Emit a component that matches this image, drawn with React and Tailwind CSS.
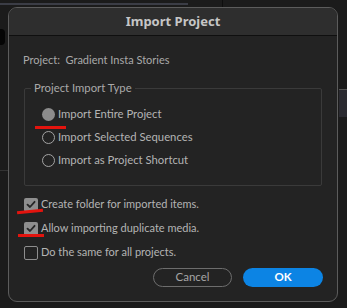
import React from 'react';

const font = { fontFamily: 'Lato, "Noto Sans", sans-serif' };

const Radio = ({ checked, label }) => (
    <div className="flex items-center h-[23px]">
        {checked ? (
            <span className="w-[13px] h-[13px] rounded-full bg-[#8c8c8c]" />
        ) : (
            <span className="w-[13px] h-[13px] rounded-full border-[1.5px] border-[#a3a3a3]" />
        )}
        <span className="ml-[3px] text-[11.3px] text-[#b4b4b4]">{label}</span>
    </div>
);

const Checkbox = ({ checked, label }) => (
    <div className="flex items-center h-[24px]">
        {checked ? (
            <span className="w-[14px] h-[14px] rounded-[2px] bg-[#8e8e8e] flex items-center justify-center">
                <svg width="10" height="9" viewBox="0 0 10 9">
                    <path d="M1.5 4.6 L4 7 L8.6 1.8" fill="none" stroke="#262626" strokeWidth="1.8" strokeLinecap="round" strokeLinejoin="round" />
                </svg>
            </span>
        ) : (
            <span className="w-[14px] h-[14px] rounded-[2px] border-[1.5px] border-[#8e8e8e]" />
        )}
        <span className="ml-[3px] text-[11px] text-[#b4b4b4]">{label}</span>
    </div>
);

export default function App() {
    return (
        <div className="relative w-[347px] h-[308px] bg-[#1b1b1b] overflow-hidden" style={font}>
            {/* background app chrome */}
            <div className="absolute left-0 top-[3px] w-[188px] h-[2px] bg-[#3b3d46]" />
            <div className="absolute left-[222px] top-0 w-px h-[7px] bg-[#0e0e0e]" />
            <div className="absolute left-0 top-[29px] w-[5px] h-[16px] bg-[#050505] rounded-r" />
            <div className="absolute left-[339px] top-[89px] w-[8px] h-[28px] bg-[#2b2b31] border-t border-[#555]" />
            <div className="absolute left-0 top-[170px] w-[8px] h-px bg-[#333]" />

            <div className="relative ml-[8px] mt-[7px] w-[330px] h-[295px] rounded-[9px] border border-[#5c5c5c] bg-[#232323] overflow-hidden flex flex-col">
                <div className="h-[28px] bg-[#2e2e2e] border-b border-[#0f0f0f] flex items-center justify-center">
                    <span className="text-[13px] font-bold text-[#c6c6c6]" style={{ fontFamily: '"Noto Sans", sans-serif' }}>Import Project</span>
                </div>

                <div className="pl-[14px] pr-[15px] pt-[16px] text-[11px] text-[#a9a9a9]">
                    Project:&nbsp; Gradient Insta Stories
                </div>

                <div className="relative ml-[15px] mr-[15px] mt-[19px] h-[98px] border border-[#3a3a3a] rounded-[2px]">
                    <span className="absolute left-[6px] top-[-9px] px-[3px] bg-[#232323] text-[11.3px] text-[#a9a9a9] leading-[16px]">
                        Project Import Type
                    </span>
                    <div className="pl-[17px] pt-[14px] flex flex-col">
                        <Radio checked label="Import Entire Project" />
                        <Radio label="Import Selected Sequences" />
                        <Radio label="Import as Project Shortcut" />
                    </div>
                    <div className="absolute left-[10px] top-[37px] w-[31px] h-[3px] bg-[#e3140e]" />
                </div>

                <div className="relative ml-[15px] mt-[7px] flex flex-col">
                    <Checkbox checked label="Create folder for imported items." />
                    <Checkbox checked label="Allow importing duplicate media." />
                    <Checkbox label="Do the same for all projects." />
                    <div className="absolute left-[-7px] top-[17px] w-[26px] h-[3px] bg-[#e3140e] -rotate-[6deg]" />
                    <div className="absolute left-[-6px] top-[41px] w-[26px] h-[3px] bg-[#e3140e]" />
                </div>

                <div className="flex justify-end gap-[11px] pr-[14px] mt-[3px]">
                    <button className="w-[79px] h-[19px] rounded-full border border-[#6d6d6d] text-[11.5px] text-[#a6a6a6] leading-none">
                        Cancel
                    </button>
                    <button className="w-[80px] h-[19px] rounded-full bg-[#0c84e4] text-[11.5px] font-bold text-white leading-none">
                        OK
                    </button>
                </div>
            </div>
        </div>
    );
}
